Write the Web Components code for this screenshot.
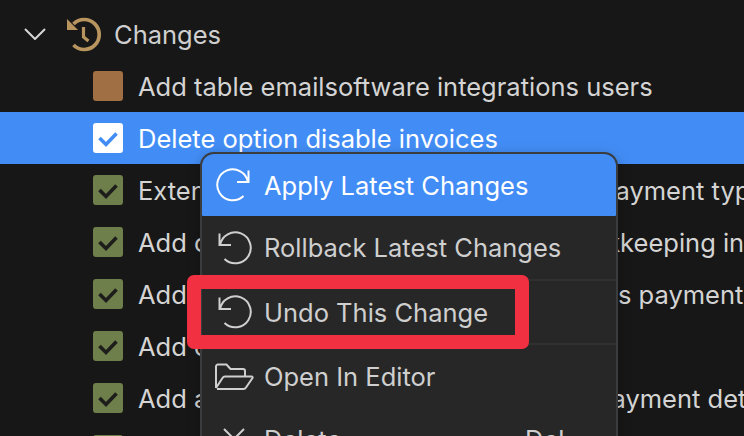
<!DOCTYPE html>
<html><head><meta charset="utf-8"><style>
html,body{margin:0;padding:0;background:#171717;height:100%;overflow:hidden}
body{font-family:Inter,"Liberation Sans",sans-serif;-webkit-font-smoothing:antialiased}
</style></head><body>
<x-app></x-app>
<script>
const ICONS={
 chev:'<svg width="22" height="12" viewBox="0 0 22 12"><path d="M1 1l10 10L21 1" fill="none" stroke="#d6d6d6" stroke-width="2"/></svg>',
 hist:'<svg width="36" height="36" viewBox="0 0 36 36"><path d="M1 3v11h11z" fill="#b8955f"/><path d="M7.500 8A15 15 0 1 1 7.500 29" fill="none" stroke="#b8955f" stroke-width="3.700"/><path d="M17.500 11v10l5 4" fill="none" stroke="#b8955f" stroke-width="3.200"/></svg>',
 apply:'<svg width="38" height="38" viewBox="0 0 38 38"><path d="M33.500 4.500v11.500H22M33 16A15.500 15.500 0 1 0 28.500 30" fill="none" stroke="#fff" stroke-width="2"/></svg>',
 undo:'<svg width="38" height="38" viewBox="0 0 38 38"><path d="M4.500 4.500v11.500H16M5 16A15.500 15.500 0 1 1 9.500 30" fill="none" stroke="#cfcfcf" stroke-width="2"/></svg>',
 folder:'<svg width="40" height="28" viewBox="0 0 40 28"><path d="M2 25V3.500A2 2 0 0 1 4 1.500h8.500l4 4.500H29a2 2 0 0 1 2 2V13M3 26h26.500a3 3 0 0 0 2.500-1.500l6.500-9.500a1 1 0 0 0-1-1.500H11a3 3 0 0 0-2.500 1.500L2 25" fill="none" stroke="#cfcfcf" stroke-width="2"/></svg>',
 del:'<svg width="38" height="38" viewBox="0 0 38 38"><path d="M9 9l20 20M29 9L9 29" fill="none" stroke="#cfcfcf" stroke-width="2"/></svg>'
};
function def(name,css,html){
 customElements.define(name,class extends HTMLElement{
  connectedCallback(){ if(this.shadowRoot) return;
   const s=this.attachShadow({mode:'open'});
   s.innerHTML='<style>'+css+'</style>'+(typeof html==='function'?html(this):html);
  }
 });
}
def('x-check',`:host{display:block;width:30px;height:30px;border-radius:3px;flex:none;background:var(--box,#6e7f4b)}
svg{display:block}`,el=>{
 if(el.hasAttribute('empty')) return '';
 return '<svg width="30" height="30" viewBox="0 0 30 30"><path d="M6.500 15l6.500 6.500L23.500 10.500" fill="none" stroke="var(--tick,#1d1d1b)" stroke-width="3.600"/></svg>';
});
def('x-row',`:host{display:flex;align-items:center;height:52px;padding-left:93px;gap:15px;color:#d4d4d4;font-size:25.500px;white-space:nowrap;overflow:hidden}
:host([selected]){background:#428df5;color:#fff}`,'<slot></slot>');
def('x-group',`:host{display:flex;align-items:center;height:52px;padding-left:24px;color:#cfcfcf;font-size:25.500px;white-space:nowrap}
.c{width:22px;flex:none;display:flex}.h{margin-left:20px;width:36px;height:36px;flex:none;display:flex}.t{margin-left:12px}`,
 el=>`<span class="c">${ICONS.chev}</span><span class="h">${ICONS.hist}</span><span class="t"><slot></slot></span>`);
def('x-item',`:host{display:flex;align-items:center;height:var(--h,64px);box-sizing:border-box;padding-left:12px;color:#cfcfcf;font-size:25.500px;white-space:nowrap;position:relative}
:host([active]){background:#428df5;color:#fff;border-radius:0 0 1px 1px}
:host([sep]){border-bottom:2px solid #303030}
.i{width:40px;height:38px;flex:none;display:flex;align-items:center;justify-content:center}
.t{flex:1;margin-left:10px}
.k{position:absolute;left:323px}`,
 el=>`<span class="i">${ICONS[el.getAttribute('icon')]}</span><span class="t"><slot></slot></span>${el.hasAttribute('key')?`<span class="k">${el.getAttribute('key')}</span>`:''}`);
def('x-menu',`:host{display:block;position:absolute;left:200px;top:152px;width:418px;box-sizing:border-box;border:2px solid #3b3c3d;border-radius:14px;background:#272727;overflow:hidden;box-shadow:0 4px 14px rgba(0,0,0,.25)}`,'<slot></slot>');
def('x-callout',`:host{display:block;position:absolute;left:187px;top:275px;width:342px;height:74px;box-sizing:border-box;border:14px solid #f13041;border-radius:7px}`,'');
def('x-app',`:host{display:block;position:relative;height:436px;overflow:hidden;padding-top:8px;box-sizing:border-box;background:#171717}`,
`<x-group>Changes</x-group>
<x-row><x-check empty style="--box:#a06f43"></x-check><span>Add table emailsoftware integrations users</span></x-row>
<x-row selected><x-check style="--box:#fff;--tick:#428df5"></x-check><span>Delete option disable invoices</span></x-row>
<x-row><x-check></x-check><span>Extend invoice options with additional payment types</span></x-row>
<x-row><x-check></x-check><span>Add customer tables column id for bookkeeping integrations</span></x-row>
<x-row><x-check></x-check><span>Add billing columns to customer invoices payments table</span></x-row>
<x-row><x-check></x-check><span>Add customer invoices table</span></x-row>
<x-row><x-check></x-check><span>Add additional table columns type for payment details</span></x-row>
<x-row><x-check></x-check><span>Add index</span></x-row>
<x-menu>
 <x-item active icon="apply" style="--h:62px">Apply Latest Changes</x-item>
 <x-item sep icon="undo" style="--h:65px">Rollback Latest Changes</x-item>
 <x-item sep icon="undo" style="--h:64px">Undo This Change</x-item>
 <x-item icon="folder" style="--h:63px">Open In Editor</x-item>
 <x-item icon="del" key="Del" style="--h:62px">Delete</x-item>
</x-menu>
<x-callout></x-callout>`);
</script>
</body></html>
